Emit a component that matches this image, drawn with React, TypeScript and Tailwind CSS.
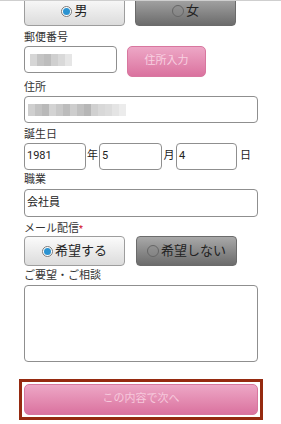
import React from 'react';

const postalMosaic = ['#d6d6d6', '#c4c4c4', '#bdbdbd', '#cfcfcf', '#d9d9d9', '#e6e6e6'];
const addressMosaic = [
  '#cfcfcf', '#c2c2c2', '#b9b9b9', '#d3d3d3', '#c8c8c8', '#bcbcbc', '#cdcdcd',
  '#c0c0c0', '#b6b6b6', '#d0d0d0', '#d8d8d8', '#dcdcdc', '#e4e4e4', '#ececec',
];

const Mosaic = ({ colors }: { colors: string[] }) => (
  <div className="flex h-[12px]">
    {colors.map((c, i) => (
      <div key={i} className="w-[7px] h-full" style={{ backgroundColor: c }} />
    ))}
  </div>
);

const Label = ({ children }: { children: React.ReactNode }) => (
  <div className="h-[14px] text-[11px] leading-[14px] text-[#333]">{children}</div>
);

const Radio = ({ checked }: { checked: boolean }) =>
  checked ? (
    <span className="inline-flex items-center justify-center w-[11px] h-[11px] rounded-full border border-[#7a7a7a] bg-white">
      <span className="w-[7px] h-[7px] rounded-full bg-[#2b93d1]" />
    </span>
  ) : (
    <span className="inline-block w-[12px] h-[12px] rounded-full border border-[#666] bg-[#8c8c8c]/40" />
  );

const Choice = ({ checked, label, className = '' }: { checked: boolean; label: string; className?: string }) => (
  <div
    className={
      'h-[30px] w-[101px] rounded-[4px] flex items-center justify-center gap-[2px] text-[13px] text-[#222] ' +
      (checked
        ? 'border border-[#9d9d9d] bg-gradient-to-b from-[#fbfbfb] to-[#dcdcdc] '
        : 'border border-[#6b6b6b] bg-gradient-to-b from-[#a9a9a9] to-[#6c6c6c] ') +
      className
    }
  >
    <Radio checked={checked} />
    <span>{label}</span>
  </div>
);

const inputCls = 'h-[27px] rounded-[4px] border border-[#8f8f8f] bg-white flex items-center pl-[2px] text-[11px] text-[#222]';

export default function App() {
  return (
    <div className="relative w-full min-h-[424px] overflow-hidden bg-white font-['Roboto','Noto_Sans_CJK_JP',sans-serif]">
      <div className="absolute top-0 left-0 right-0 h-px bg-[#cfcfcf] z-10" />
      <div className="pl-[24px] flex flex-col">
        <div className="flex gap-[10px] -mt-[4px]">
          <Choice checked label="男" />
          <Choice checked={false} label="女" />
        </div>

        <div className="mt-[5px]"><Label>郵便番号</Label></div>
        <div className="mt-px flex items-start gap-[10px]">
          <div className={inputCls + ' w-[93px] pl-[5px]'}>
            <Mosaic colors={postalMosaic} />
          </div>
          <button className="h-[31px] w-[79px] rounded-[5px] border border-[#d8779f] bg-gradient-to-b from-[#eda7c6] to-[#da729f] text-[11px] text-[#f8d0e1]">
            住所入力
          </button>
        </div>

        <div className="mt-[4px]"><Label>住所</Label></div>
        <div className={inputCls + ' mt-px w-[234px] pl-[3px]'}>
          <Mosaic colors={addressMosaic} />
        </div>

        <div className="mt-[5px]"><Label>誕生日</Label></div>
        <div className="mt-px flex items-center text-[11px] text-[#222]">
          <div className={inputCls + ' w-[62px]'}>1981</div>
          <span className="w-[13px] text-center">年</span>
          <div className={inputCls + ' w-[63px]'}>5</div>
          <span className="w-[14px] text-center">月</span>
          <div className={inputCls + ' w-[61px]'}>4</div>
          <span className="pl-[3px]">日</span>
        </div>

        <div className="mt-[3px]"><Label>職業</Label></div>
        <div className={inputCls + ' mt-[2px] h-[28px] w-[234px]'}>会社員</div>

        <div className="mt-[5px]">
          <Label>
            メール配信<span className="text-[#d0021b] text-[9px] align-top">*</span>
          </Label>
        </div>
        <div className="flex gap-[11px]">
          <Choice checked label="希望する" className="w-[100px] text-[12px]" />
          <Choice checked={false} label="希望しない" className="text-[12px]" />
        </div>

        <div className="mt-[3px]"><Label>ご要望・ご相談</Label></div>
        <div className="mt-[2px] h-[77px] w-[234px] rounded-[4px] border border-[#8f8f8f] bg-white" />
      </div>

      <div className="mt-[17px] ml-[19px] w-[244px] h-[41px] border-[3px] border-[#952a10] p-[2px]">
        <button className="w-full h-full rounded-[5px] border border-[#d8779f] bg-gradient-to-b from-[#eda7c6] to-[#da729f] text-[11px] text-[#f6c8dc]">
          この内容で次へ
        </button>
      </div>
    </div>
  );
}
